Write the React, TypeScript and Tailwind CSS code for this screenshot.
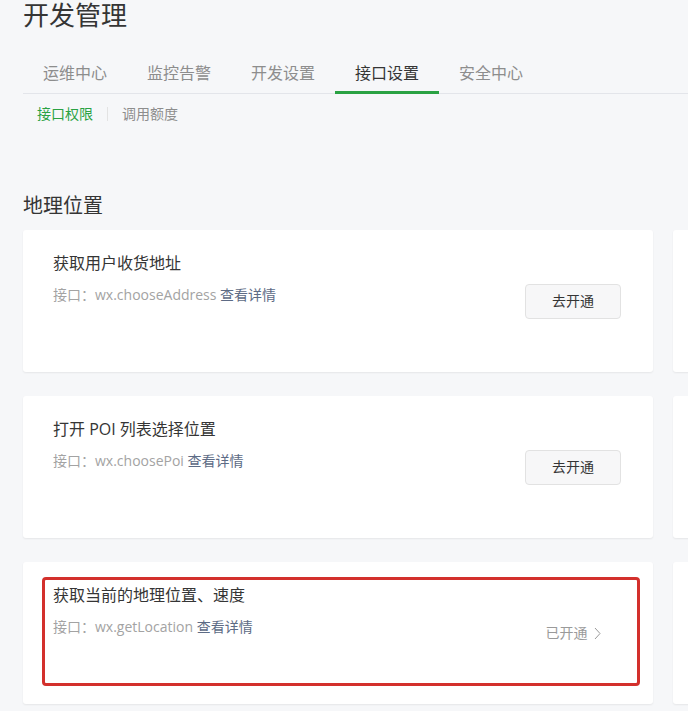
import React from "react";

const font = {
  fontFamily: '"Open Sans", "Noto Sans CJK SC", sans-serif',
};

const tabs = ["运维中心", "监控告警", "开发设置", "接口设置", "安全中心"];

interface Api {
  title: string;
  api: string;
  enabled: boolean;
  marked?: boolean;
}

const apis: Api[] = [
  { title: "获取用户收货地址", api: "wx.chooseAddress", enabled: false },
  { title: "打开 POI 列表选择位置", api: "wx.choosePoi", enabled: false },
  { title: "获取当前的地理位置、速度", api: "wx.getLocation", enabled: true, marked: true },
];

const ApiCard = ({ item }: { item: Api }) => (
  <div className="relative h-[142px] bg-white rounded-[3px] shadow-[0_1px_2px_rgba(0,0,0,0.07)] flex justify-between pl-[30px] pr-[32px]">
    <div className="pt-[22px]">
      <div className="text-base leading-[22px] text-[#353535] whitespace-nowrap">{item.title}</div>
      <div className="mt-[10px] text-sm leading-[22px] text-[#a3a3a3] whitespace-nowrap">
        接口：{item.api} <span className="text-[#5d6b85]">查看详情</span>
      </div>
    </div>
    <div className="self-center">
      {item.enabled ? (
        <div className="w-[96px] h-[35px] flex items-center justify-center gap-[6px] text-sm text-[#9a9a9a]">
          <span>已开通</span>
          <svg width="7" height="13" viewBox="0 0 7 13" fill="none">
            <path d="M1 1l5 5.5L1 12" stroke="#9a9a9a" strokeWidth="1" />
          </svg>
        </div>
      ) : (
        <button className="w-[96px] h-[35px] rounded-[4px] border border-[#e2e2e2] bg-[#f7f7f8] text-sm text-[#353535]">
          去开通
        </button>
      )}
    </div>
    {item.marked && (
      <div className="absolute left-[19px] top-[15px] w-[598px] h-[109px] border-[3px] border-[#d3302c] rounded-[4px] pointer-events-none" />
    )}
  </div>
);

export default function App() {
  return (
    <div className="w-full min-h-screen bg-[#f6f7f9] overflow-hidden pl-[23px]" style={font}>
      <h1 className="text-[26px] leading-[30px] text-[#353535]">开发管理</h1>

      <div className="mt-[19px] flex border-b border-[#e3e5ea]">
        {tabs.map((t) => (
          <div
            key={t}
            className={
              t === "接口设置"
                ? "px-5 pt-3 pb-[6px] text-base leading-6 -mb-px border-b-[3px] border-[#2aa243] text-[#353535]"
                : "px-5 pt-3 pb-[6px] text-base leading-6 -mb-px border-b-[3px] border-transparent text-[#8d8d8d]"
            }
          >
            {t}
          </div>
        ))}
      </div>

      <div className="mt-[10px] pl-[14px] flex items-center text-sm leading-5">
        <span className="text-[#2aa243]">接口权限</span>
        <span className="mx-[14px] w-px h-[14px] bg-[#e3e3e3]" />
        <span className="text-[#8d8d8d]">调用额度</span>
      </div>

      <h2 className="mt-[68px] text-[20px] leading-[28px] text-[#353535]">地理位置</h2>

      {/* second column only peeks in at the right edge */}
      <div className="mt-[10px] grid grid-cols-[630px_630px] gap-x-5 gap-y-6 pb-6">
        {apis.map((a, i) => (
          <React.Fragment key={i}>
            <ApiCard item={a} />
            <div className="h-[142px] bg-white rounded-[3px] shadow-[0_1px_2px_rgba(0,0,0,0.07)]" />
          </React.Fragment>
        ))}
      </div>
    </div>
  );
}
